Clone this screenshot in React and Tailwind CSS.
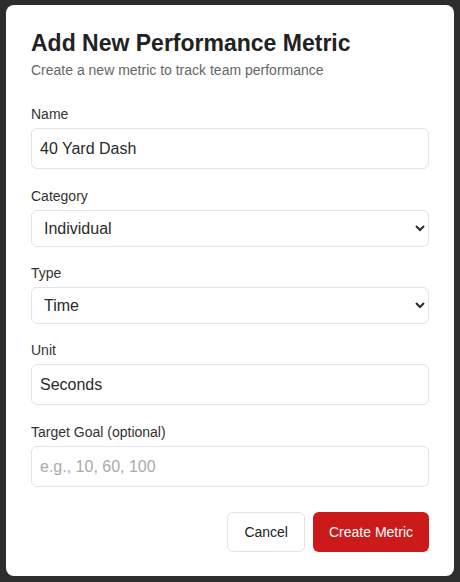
import React from "react";

function Label({ children }) {
  return <label className="block text-[14px] leading-[16px] text-[#333] mb-[6px]">{children}</label>;
}

export default function App() {
  return (
    <div className="min-h-screen bg-[#2d2d2d] flex justify-center pt-[5px] font-['Liberation_Sans',Arial,sans-serif]">
      <div className="w-[448px] h-[571px] bg-white rounded-[8px] px-[25px] pt-[24px]">
        <h1 className="text-[23px] leading-[28px] font-bold text-[#222] m-0">Add New Performance Metric</h1>
        <p className="text-[14px] leading-[16px] text-[#666] mt-[5px]">Create a new metric to track team performance</p>

        <div className="mt-[28px]">
          <Label>Name</Label>
          <input
            type="text"
            defaultValue="40 Yard Dash"
            className="w-full h-[41px] border border-[#e2e2e2] rounded-[6px] px-[8px] text-[16px] text-[#2a2a2a] outline-none"
          />
        </div>

        <div className="mt-[19px]">
          <Label>Category</Label>
          <select
            defaultValue="Individual"
            className="w-full h-[37px] border border-[#e2e2e2] rounded-[6px] px-[8px] text-[16px] text-[#2a2a2a] bg-white outline-none"
          >
            <option>Individual</option>
            <option>Team</option>
          </select>
        </div>

        <div className="mt-[18px]">
          <Label>Type</Label>
          <select
            defaultValue="Time"
            className="w-full h-[37px] border border-[#e2e2e2] rounded-[6px] px-[8px] text-[16px] text-[#2a2a2a] bg-white outline-none"
          >
            <option>Time</option>
            <option>Distance</option>
          </select>
        </div>

        <div className="mt-[18px]">
          <Label>Unit</Label>
          <input
            type="text"
            defaultValue="Seconds"
            className="w-full h-[41px] border border-[#e2e2e2] rounded-[6px] px-[8px] text-[16px] text-[#2a2a2a] outline-none"
          />
        </div>

        <div className="mt-[19px]">
          <Label>Target Goal (optional)</Label>
          <input
            type="text"
            placeholder="e.g., 10, 60, 100"
            className="w-full h-[41px] border border-[#e2e2e2] rounded-[6px] px-[8px] text-[16px] text-[#2a2a2a] placeholder:text-[#aaa] outline-none"
          />
        </div>

        <div className="flex justify-end gap-[8px] mt-[25px]">
          <button className="h-[40px] px-[16px] border border-[#e2e2e2] rounded-[6px] bg-white text-[14px] text-[#222]">
            Cancel
          </button>
          <button className="h-[40px] px-[16px] rounded-[6px] bg-[#cc1a1a] text-[14px] text-white">
            Create Metric
          </button>
        </div>
      </div>
    </div>
  );
}
